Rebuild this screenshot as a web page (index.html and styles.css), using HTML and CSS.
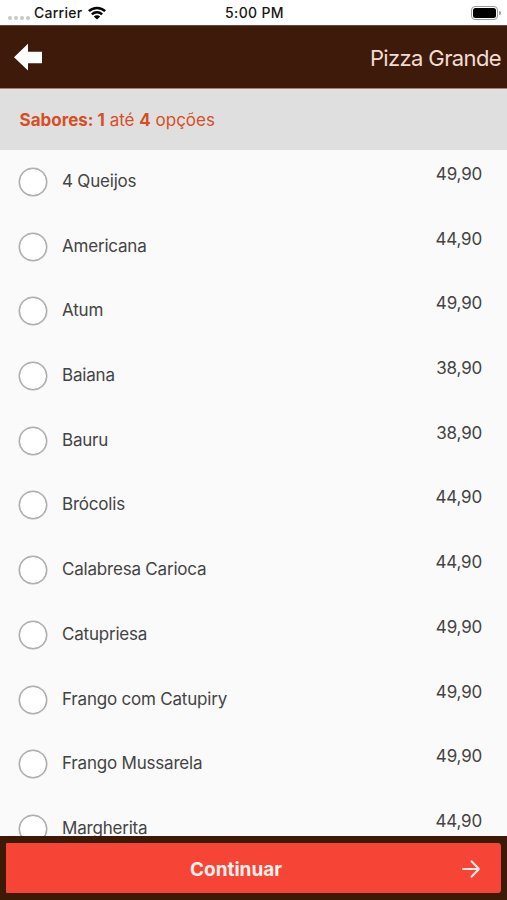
FILE: index.html
```html
<!DOCTYPE html>
<html lang="pt-BR">
<head>
<meta charset="utf-8">
<meta name="viewport" content="width=device-width, initial-scale=1">
<title>Pizza Grande</title>
<link rel="stylesheet" href="styles.css">
</head>
<body>
<div class="screen">
  <div class="status">
    <div class="carrier">
      <span class="signal"><i></i><i></i><i></i><i></i></span>
      <span class="carrier-name">Carrier</span>
      <svg class="wifi" width="18" height="14" viewBox="0 0 18 14" fill="none" stroke="#050505" stroke-width="2.5"><path d="M.9 5.2C5.4.8 12.6.8 17.1 5.2M3.9 8.3c2.9-2.8 7.3-2.8 10.2 0"/><path d="M9 13.6 5.8 10.5c1.8-1.7 4.6-1.7 6.4 0Z" fill="#050505" stroke="none"/></svg>
    </div>
    <span class="time">5:00 PM</span>
    <span class="power"><span class="battery"><b></b></span><i class="battery-tip"></i></span>
  </div>
  <header class="header">
    <svg width="28" height="28" viewBox="0 0 28 28" fill="#fff"><path d="M0 14.2 14 .8v7.9h14v11.6H14v7.1Z"/></svg>
    <h1>Pizza Grande</h1>
  </header>
  <div class="section"><b>Sabores: 1</b> até <b>4</b> opções</div>
  <ul class="list">
    <li><span class="radio"></span><span class="name">4 Queijos</span><span class="price">49,90</span></li>
    <li><span class="radio"></span><span class="name">Americana</span><span class="price">44,90</span></li>
    <li><span class="radio"></span><span class="name">Atum</span><span class="price">49,90</span></li>
    <li><span class="radio"></span><span class="name">Baiana</span><span class="price">38,90</span></li>
    <li><span class="radio"></span><span class="name">Bauru</span><span class="price">38,90</span></li>
    <li><span class="radio"></span><span class="name">Brócolis</span><span class="price">44,90</span></li>
    <li><span class="radio"></span><span class="name">Calabresa Carioca</span><span class="price">44,90</span></li>
    <li><span class="radio"></span><span class="name">Catupriesa</span><span class="price">49,90</span></li>
    <li><span class="radio"></span><span class="name">Frango com Catupiry</span><span class="price">49,90</span></li>
    <li><span class="radio"></span><span class="name">Frango Mussarela</span><span class="price">49,90</span></li>
    <li><span class="radio"></span><span class="name">Margherita</span><span class="price">44,90</span></li>
  </ul>
  <footer class="footer">
    <button class="continue" type="button">
      <span class="label">Continuar</span>
      <svg width="20" height="20" viewBox="0 0 20 20" fill="none" stroke="#ffeae4" stroke-width="2" stroke-linecap="round" stroke-linejoin="round"><path d="M2 10h16M10.5 2.2 18 10l-7.5 7.8"/></svg>
    </button>
  </footer>
</div>
</body>
</html>
```

FILE: styles.css
```css
* { box-sizing: border-box; }
body { margin: 0; font-family: Inter, "Liberation Sans", sans-serif; color: #444; }
.screen { display: flex; flex-direction: column; height: 900px; overflow: hidden; background: #fafafa; }

.status { flex: 0 0 25px; display: grid; grid-template-columns: 1fr auto 1fr; align-items: center; padding: 1px 6px 0 8px; background: #fff; color: #161616; font-size: 14px; font-weight: 500; line-height: 24px; }
.carrier { display: flex; align-items: center; }
.signal { display: flex; gap: 2px; margin: 9px 4px 0 0; }
.signal i { width: 4px; height: 4px; border-radius: 50%; background: #c8c8c8; }
.carrier-name { width: 48px; white-space: nowrap; letter-spacing: .25px; }
.wifi { margin-left: 6px; margin-top: -1px; }
.time { white-space: nowrap; letter-spacing: .35px; }
.power { display: flex; align-items: center; justify-content: flex-end; }
.battery { width: 27px; height: 14px; padding: 1px; border: 1px solid #999; border-radius: 4px; }
.battery b { display: block; height: 10px; border-radius: 2.5px; background: #000; }
.battery-tip { width: 2px; height: 4px; margin-left: 1px; border-radius: 0 2px 2px 0; background: #999; }

.header { flex: 0 0 64px; display: flex; align-items: center; justify-content: space-between; padding: 0 6px 0 14px; background: #3d1a0a; border-top: 1px solid #66493c; border-bottom: 1px solid #9d8579; }
.header h1 { margin: 1px 0 0; color: #f1ddd0; font-size: 22px; font-weight: 400; line-height: 28px; letter-spacing: -.62px; }

.section { flex: 0 0 61px; padding-left: 19.5px; background: #dfdfdf; border-top: 1px solid #e9e3df; color: #d64f24; font-size: 17px; line-height: 60px; }
.section b { font-weight: 700; }

.list { flex: 1; min-height: 0; margin: 0; padding: 0; overflow: hidden; list-style: none; font-size: 17px; letter-spacing: -.2px; }
.list li { display: grid; grid-template-columns: 43px 1fr auto; align-items: start; height: 64.7px; padding: 0 25px 0 19px; line-height: 24px; }
.radio { width: 28px; height: 28px; margin: 18px 0 0 .3px; border: 1px solid #a5a5a5; border-radius: 50%; background: #fff; box-shadow: 0 0 0 .5px #b5b5b5; }
.name { margin-top: 19px; }
.price { margin-top: 12px; }

.footer { flex: 0 0 64px; padding: 7px 6px; background: #3d1a05; }
.continue { display: grid; grid-template-columns: 1fr auto 1fr; align-items: center; width: 100%; height: 50px; padding: 0 20px 0 0; border: 0; border-radius: 1px 3px 3px 1px; background: #f64437; color: #fff0eb; font: 700 19px/26px Inter, "Liberation Sans", sans-serif; }
.label { grid-column: 2; margin: 3px 15px 0 0; }
.continue svg { justify-self: end; margin-top: 2px; }
```
